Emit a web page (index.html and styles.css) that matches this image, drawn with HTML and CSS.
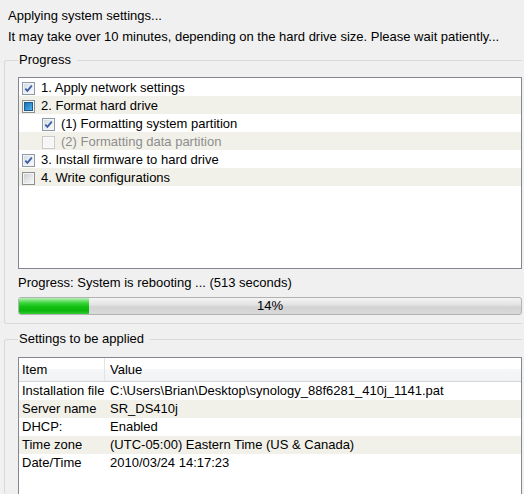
FILE: index.html
```html
<!DOCTYPE html>
<html>
<head>
<meta charset="utf-8">
<title>Applying system settings</title>
<link rel="stylesheet" href="styles.css">
</head>
<body>
<svg class="defs" width="0" height="0" aria-hidden="true">
  <defs>
    <linearGradient id="boxfill" x1="0" y1="0" x2="1" y2="1">
      <stop offset="0" stop-color="#cdd1d6"/>
      <stop offset="1" stop-color="#f7f7f7"/>
    </linearGradient>
    <linearGradient id="boxfillchk" x1="0" y1="0" x2="1" y2="1">
      <stop offset="0" stop-color="#d6dde6"/>
      <stop offset="1" stop-color="#f8f9fb"/>
    </linearGradient>
    <linearGradient id="indet" x1="0" y1="0" x2="1" y2="1">
      <stop offset="0" stop-color="#1b6cb5"/>
      <stop offset="0.6" stop-color="#3a98d6"/>
      <stop offset="1" stop-color="#5db7e8"/>
    </linearGradient>
  </defs>
</svg>
<div class="page">
  <div class="msg">Applying system settings...</div>
  <div class="msg">It may take over 10 minutes, depending on the hard drive size. Please wait patiently...</div>

  <fieldset class="group group-progress">
    <legend>Progress</legend>
    <div class="listbox">
      <div class="row">
        <svg class="cb" viewBox="0 0 13 13"><rect x="0.5" y="0.5" width="12" height="12" fill="#f4f4f4" stroke="#8e9aa8"/><rect x="2" y="2" width="9" height="9" fill="url(#boxfillchk)"/><path d="M3.3 6.6 L5.4 8.9 L9.8 3.6" fill="none" stroke="#3a5ba6" stroke-width="1.7"/></svg>
        <span>1. Apply network settings</span>
      </div>
      <div class="row">
        <svg class="cb" viewBox="0 0 13 13"><rect x="0.5" y="0.5" width="12" height="12" fill="#f4f4f4" stroke="#8e8f8f"/><rect x="2.5" y="2.5" width="8" height="8" fill="url(#indet)" stroke="#1c5a93"/></svg>
        <span>2. Format hard drive</span>
      </div>
      <div class="row sub">
        <svg class="cb" viewBox="0 0 13 13"><rect x="0.5" y="0.5" width="12" height="12" fill="#f4f4f4" stroke="#8e9aa8"/><rect x="2" y="2" width="9" height="9" fill="url(#boxfillchk)"/><path d="M3.3 6.6 L5.4 8.9 L9.8 3.6" fill="none" stroke="#3a5ba6" stroke-width="1.7"/></svg>
        <span>(1) Formatting system partition</span>
      </div>
      <div class="row sub disabled">
        <svg class="cb" viewBox="0 0 13 13"><rect x="0.5" y="0.5" width="12" height="12" fill="#fbfbfb" stroke="#c9c9c9"/><rect x="2" y="2" width="9" height="9" fill="#f6f6f6"/></svg>
        <span>(2) Formatting data partition</span>
      </div>
      <div class="row">
        <svg class="cb" viewBox="0 0 13 13"><rect x="0.5" y="0.5" width="12" height="12" fill="#f4f4f4" stroke="#8e9aa8"/><rect x="2" y="2" width="9" height="9" fill="url(#boxfillchk)"/><path d="M3.3 6.6 L5.4 8.9 L9.8 3.6" fill="none" stroke="#3a5ba6" stroke-width="1.7"/></svg>
        <span>3. Install firmware to hard drive</span>
      </div>
      <div class="row">
        <svg class="cb" viewBox="0 0 13 13"><rect x="0.5" y="0.5" width="12" height="12" fill="#f4f4f4" stroke="#8e8f8f"/><rect x="2" y="2" width="9" height="9" fill="url(#boxfill)"/></svg>
        <span>4. Write configurations</span>
      </div>
    </div>
    <div class="status">Progress: System is rebooting ... (513 seconds)</div>
    <div class="bar">
      <div class="fill" style="width:14%"></div>
      <div class="label">14%</div>
    </div>
  </fieldset>

  <fieldset class="group group-settings">
    <legend>Settings to be applied</legend>
    <div class="tablebox">
      <div class="thead">
        <div class="c1">Item</div>
        <div class="c2">Value</div>
      </div>
      <div class="trow"><div class="c1">Installation file</div><div class="c2">C:\Users\Brian\Desktop\synology_88f6281_410j_1141.pat</div></div>
      <div class="trow"><div class="c1">Server name</div><div class="c2">SR_DS410j</div></div>
      <div class="trow"><div class="c1">DHCP:</div><div class="c2">Enabled</div></div>
      <div class="trow"><div class="c1">Time zone</div><div class="c2">(UTC-05:00) Eastern Time (US &amp; Canada)</div></div>
      <div class="trow"><div class="c1">Date/Time</div><div class="c2">2010/03/24 14:17:23</div></div>
    </div>
  </fieldset>
</div>
</body>
</html>
```

FILE: styles.css
```css
html, body {
  margin: 0;
  padding: 0;
  height: 100%;
  overflow: hidden;
  background: #f0f0f0;
}

body {
  font-family: "Liberation Sans", Arial, sans-serif;
  font-size: 13px;
  color: #000;
}

.defs {
  position: absolute;
  width: 0;
  height: 0;
}

.page {
  padding: 5px 0 0 4px;
}

.msg {
  line-height: 21px;
  padding-left: 4px;
  white-space: nowrap;
}

.group {
  box-sizing: border-box;
  width: 518px;
  margin: 5px 0 0 0;
  padding: 9px 0 8px 13px;
  border: 1px solid #d5dadd;
  border-right: none;
  border-radius: 3px 0 0 3px;
  min-width: 0;
}

.group legend {
  padding: 0 6px 0 1px;
  margin-left: 0;
  line-height: 16px;
}

.group-settings {
  margin-top: 7px;
  padding-top: 10px;
  padding-bottom: 0;
  border-bottom: none;
}

.listbox {
  box-sizing: border-box;
  height: 192px;
  background: #fff;
  border: 1px solid #828790;
}

.row {
  display: flex;
  align-items: flex-start;
  height: 18px;
  line-height: 18px;
  padding-left: 3px;
  white-space: nowrap;
}

.row:nth-child(even) {
  background: #f2f1e9;
}

.row.sub {
  padding-left: 23px;
}

.row.disabled {
  color: #8d8d8d;
}

.cb {
  flex: none;
  width: 13px;
  height: 13px;
  margin: 4px 6px 0 0;
}

.row span {
  padding-top: 1px;
}

.status {
  margin-top: 6px;
  line-height: 16px;
}

.bar {
  box-sizing: border-box;
  margin-top: 6px;
  height: 18px;
  border: 1px solid #b2b2b2;
  border-radius: 3px;
  background: linear-gradient(to bottom, #f4f4f4 0%, #e2e2e2 45%, #d2d2d2 55%, #dadada 100%);
  display: grid;
  grid-template-columns: 1fr;
  grid-template-rows: 1fr;
  overflow: hidden;
}

.fill {
  grid-area: 1 / 1;
  height: 100%;
  background: linear-gradient(to bottom, #b8f2b8 0%, #3fd53f 30%, #10c010 55%, #0cb50c 80%, #36cc36 100%);
}

.label {
  grid-area: 1 / 1;
  text-align: center;
  line-height: 16px;
  color: #000;
}

.tablebox {
  box-sizing: border-box;
  height: 137px;
  background: #fff;
  border: 1px solid #828790;
  border-bottom: none;
}

.thead, .trow {
  display: grid;
  grid-template-columns: 86px 1fr;
  white-space: nowrap;
}

.thead {
  height: 24px;
  box-sizing: border-box;
  line-height: 23px;
  border-bottom: 1px solid #d5d5d5;
  background: linear-gradient(to bottom, #ffffff 0%, #ffffff 45%, #f6f7f8 50%, #f1f2f4 100%);
}

.thead .c1 {
  border-right: 1px solid #e2e3e5;
}

.trow {
  height: 18px;
  line-height: 18px;
}

.trow:nth-child(odd) {
  background: #f2f1e9;
}

.c1 {
  padding-left: 3px;
}

.c2 {
  padding-left: 5px;
}
```
